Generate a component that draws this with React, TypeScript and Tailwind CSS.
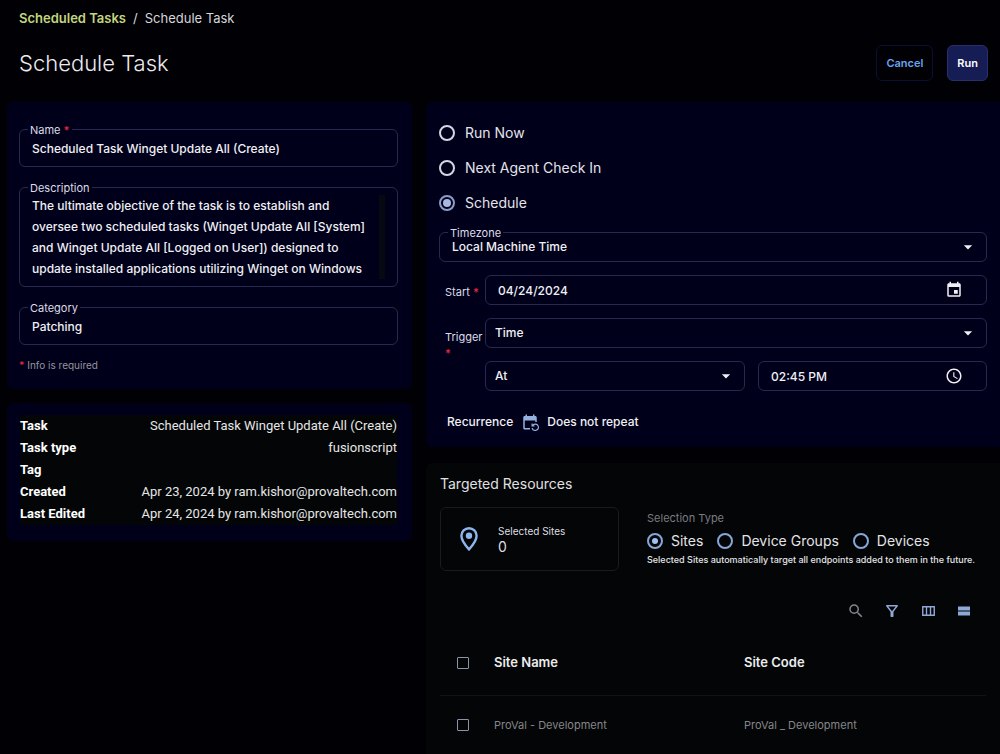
import type { ReactNode } from 'react';
import { clsx } from 'clsx';
import {
  MdAccessTime,
  MdArrowDropDown,
  MdEvent,
  MdEventRepeat,
  MdOutlineFilterAlt,
  MdSearch,
} from 'react-icons/md';

const DESCRIPTION =
  'The ultimate objective of the task is to establish and oversee two scheduled tasks (Winget Update All [System] and Winget Update All [Logged on User]) designed to update installed applications utilizing Winget on Windows';

const INFO = [
  { label: 'Task', value: 'Scheduled Task Winget Update All (Create)' },
  { label: 'Task type', value: 'fusionscript' },
  { label: 'Tag', value: '' },
  { label: 'Created', value: 'Apr 23, 2024 by ram.kishor@provaltech.com' },
  { label: 'Last Edited', value: 'Apr 24, 2024 by ram.kishor@provaltech.com' },
];

const SITES = [{ name: 'ProVal - Development', code: 'ProVal _ Development' }];

function Required() {
  return <span className="font-semibold text-[#e0243c]">*</span>;
}

function OutlinedField({
  id,
  label,
  required,
  children,
}: {
  id: string;
  label: string;
  required?: boolean;
  children: ReactNode;
}) {
  return (
    <div className="relative rounded-md border border-[#28294f]">
      <label
        htmlFor={id}
        className="absolute -top-2 left-2 bg-[#00001a] px-0.5 text-[11px] leading-4 text-[#dcdce6]"
      >
        {label} {required && <Required />}
      </label>
      {children}
    </div>
  );
}

function SelectBox({ id, options, className }: { id: string; options: string[]; className?: string }) {
  return (
    <div className="relative">
      <select
        id={id}
        aria-label={id}
        className={clsx(
          'block h-7 w-full appearance-none bg-transparent pr-8 text-xs font-medium outline-none',
          className,
        )}
      >
        {options.map((option) => (
          <option key={option}>{option}</option>
        ))}
      </select>
      <MdArrowDropDown className="pointer-events-none absolute top-1 right-2 size-5" />
    </div>
  );
}

function Radio({
  name,
  label,
  tone,
  defaultChecked,
}: {
  name: string;
  label: string;
  tone: 'light' | 'blue';
  defaultChecked?: boolean;
}) {
  return (
    <label
      className={clsx(
        'flex items-center text-sm leading-5 text-[#e4e4e8]',
        tone === 'light' ? 'gap-[10px]' : 'gap-2',
      )}
    >
      <input
        type="radio"
        name={name}
        defaultChecked={defaultChecked}
        className={clsx(
          'size-4 shrink-0 appearance-none rounded-full border-2 bg-clip-content p-0.5',
          tone === 'light'
            ? 'border-[#d5d5e6] checked:border-[#8d9cc6] checked:bg-[#a9b8e2]'
            : 'border-[#86a7d8] checked:bg-[#9cc2f5] checked:p-[3px]',
        )}
      />
      {label}
    </label>
  );
}

function Checkbox({ label }: { label: string }) {
  return (
    <input
      type="checkbox"
      aria-label={label}
      className="block size-3 appearance-none rounded-[1px] border border-[#8b93ab] checked:bg-[#8b93ab]"
    />
  );
}

function PinIcon() {
  return (
    <svg viewBox="0 0 18 24" className="h-6 w-[18px] text-[#8db5ee]">
      <path
        d="M9 1.3c-4.2 0-7.6 3.3-7.6 7.5C1.4 14.2 9 22.4 9 22.4s7.6-8.2 7.6-13.6c0-4.2-3.4-7.5-7.6-7.5z"
        fill="none"
        stroke="currentColor"
        strokeWidth="2.4"
      />
      <circle cx="9" cy="8.8" r="3.2" fill="currentColor" />
    </svg>
  );
}

function ColumnsIcon() {
  return (
    <svg viewBox="0 0 13 10" className="h-[10px] w-[13px]" fill="none" stroke="currentColor">
      <path d="M.75.75h11.5v8.5H.75zM4.5.75v8.5M8.5.75v8.5" strokeWidth="1.4" />
    </svg>
  );
}

function RowsIcon() {
  return (
    <svg viewBox="0 0 12 10" className="h-[10px] w-3" fill="currentColor">
      <path d="M0 .5h12v4H0zM0 5.5h12v4H0z" />
    </svg>
  );
}

function Header() {
  return (
    <header className="pr-3 pl-[19px]">
      <nav className="flex gap-[7px] pt-2 text-[13px] leading-5 text-[#d6d6da]">
        <a href="#tasks" className="font-semibold text-[#c3d67c]">
          Scheduled Tasks
        </a>
        <span>/</span>
        <span>Schedule Task</span>
      </nav>
      <div className="flex items-center justify-between pt-[17px] pb-[21px]">
        <h1 className="text-[22px] leading-8 font-light text-[#ececef]">Schedule Task</h1>
        <div className="flex gap-[14px] text-[11px] font-semibold">
          <button type="button" className="h-9 rounded-md border border-[#0a0f35] px-[9px] text-[#68a5f0]">
            Cancel
          </button>
          <button type="button" className="h-9 rounded-md border border-[#27306c] bg-[#151d54] px-[9px] text-white">
            Run
          </button>
        </div>
      </div>
    </header>
  );
}

function DetailsPanel() {
  return (
    <section className="rounded-md bg-[#00001a] pt-[27px] pr-[14px] pb-4 pl-3">
      <div className="flex flex-col gap-5">
        <OutlinedField id="name" label="Name" required>
          <input
            id="name"
            defaultValue="Scheduled Task Winget Update All (Create)"
            className="block h-9 w-full bg-transparent px-3 text-xs font-medium outline-none"
          />
        </OutlinedField>
        <OutlinedField id="description" label="Description">
          <div className="flex py-[7px] pr-3 pl-3">
            <textarea
              id="description"
              rows={4}
              defaultValue={DESCRIPTION}
              className="block min-w-0 flex-1 resize-none overflow-hidden bg-transparent pr-1 text-xs leading-[21px] font-medium outline-none"
            />
            <div className="w-[6px] bg-[#060a10]" />
          </div>
        </OutlinedField>
        <OutlinedField id="category" label="Category">
          <input
            id="category"
            defaultValue="Patching"
            className="block h-9 w-full bg-transparent px-3 text-xs font-medium outline-none"
          />
        </OutlinedField>
      </div>
      <p className="pt-3 text-[10px] leading-4 text-[#96969c]">
        <Required /> Info is required
      </p>
    </section>
  );
}

function InfoPanel() {
  return (
    <section className="rounded-md bg-[#00001a] pt-3 pr-[15px] pb-4 pl-[13px] font-['Roboto',sans-serif]">
      <dl className="bg-[#030506] text-[13px] leading-[22px] text-[#e6e6e6]">
        {INFO.map(({ label, value }) => (
          <div key={label} className="flex justify-between">
            <dt className="font-bold text-white">{label}</dt>
            <dd>{value}</dd>
          </div>
        ))}
      </dl>
    </section>
  );
}

function SchedulePanel() {
  return (
    <section className="rounded-l-md bg-[#00001a] px-[13px] pt-[21px] pb-[15px]">
      <div className="flex flex-col gap-[15px]">
        <Radio name="when" label="Run Now" tone="light" />
        <Radio name="when" label="Next Agent Check In" tone="light" />
        <Radio name="when" label="Schedule" tone="light" defaultChecked />
      </div>
      <div className="pt-[19px]">
        <OutlinedField id="timezone" label="Timezone">
          <SelectBox id="timezone" options={['Local Machine Time']} className="pl-3" />
        </OutlinedField>
      </div>
      <div className="grid grid-cols-[46px_minmax(0,1fr)] gap-y-[13px] pt-[13px]">
        <label htmlFor="start" className="pt-[9px] pl-1.5 text-[11px] leading-4 text-[#dcdce6]">
          Start <Required />
        </label>
        <div className="flex items-center rounded-md border border-[#28294f]">
          <input
            id="start"
            defaultValue="04/24/2024"
            className="h-7 min-w-0 flex-1 bg-transparent pl-3 text-xs font-medium outline-none"
          />
          <button type="button" aria-label="Pick a date" className="mr-[23px]">
            <MdEvent className="size-[18px]" />
          </button>
        </div>
        <label htmlFor="trigger" className="pt-[11px] pl-1.5 text-[11px] leading-4 text-[#dcdce6]">
          Trigger <Required />
        </label>
        <div className="flex flex-col gap-[13px]">
          <div className="rounded-md border border-[#28294f]">
            <SelectBox id="trigger" options={['Time']} className="pl-[9px]" />
          </div>
          <div className="grid grid-cols-[minmax(0,260fr)_minmax(0,229fr)] gap-[13px]">
            <div className="rounded-md border border-[#28294f]">
              <SelectBox id="at" options={['At']} className="pl-[9px]" />
            </div>
            <div className="flex items-center rounded-md border border-[#28294f]">
              <input
                aria-label="Time of day"
                defaultValue="02:45 PM"
                className="h-7 min-w-0 flex-1 bg-transparent pl-3 text-xs font-medium outline-none"
              />
              <button type="button" aria-label="Pick a time" className="mr-[23px]">
                <MdAccessTime className="size-[18px]" />
              </button>
            </div>
          </div>
        </div>
      </div>
      <div className="flex items-center gap-2 pt-[21px] pl-2 text-xs leading-5 font-medium">
        <span>Recurrence</span>
        <MdEventRepeat className="size-[18px] text-[#93b2e0]" />
        <span>Does not repeat</span>
      </div>
    </section>
  );
}

function TargetsPanel() {
  return (
    <section className="flex-1 rounded-tl-md bg-[#030506] px-[14px] pt-[11px]">
      <h2 className="text-sm leading-5 text-[#e0e0e2]">Targeted Resources</h2>
      <div className="flex gap-7 pt-[13px]">
        <div className="flex h-16 w-[179px] shrink-0 items-center gap-5 rounded-md border border-[#181b20] pl-[19px]">
          <PinIcon />
          <div className="text-[#dedee2]">
            <div className="text-[10px] leading-4">Selected Sites</div>
            <div className="text-sm leading-4">0</div>
          </div>
        </div>
        <div role="radiogroup" aria-labelledby="selection-type" className="pt-[3px] text-[#e4e4e8]">
          <div id="selection-type" className="text-[11px] leading-4 text-[#7c7c80]">
            Selection Type
          </div>
          <div className="flex gap-[14px] pt-[5px]">
            <Radio name="selection" label="Sites" tone="blue" defaultChecked />
            <Radio name="selection" label="Device Groups" tone="blue" />
            <Radio name="selection" label="Devices" tone="blue" />
          </div>
          <p className="text-[9px] leading-[18px] font-medium whitespace-nowrap">
            Selected Sites automatically target all endpoints added to them in the future.
          </p>
        </div>
      </div>
      <div className="flex items-center justify-end gap-3 pt-7 pr-[10px] text-[#8fa9d6]">
        <button type="button" aria-label="Search" className="grid size-6 place-items-center text-[#82858e]">
          <MdSearch className="size-[18px]" />
        </button>
        <button type="button" aria-label="Filter" className="grid size-6 place-items-center">
          <MdOutlineFilterAlt className="size-[18px]" />
        </button>
        <button type="button" aria-label="Columns" className="grid size-6 place-items-center">
          <ColumnsIcon />
        </button>
        <button type="button" aria-label="Density" className="grid size-6 place-items-center">
          <RowsIcon />
        </button>
      </div>
      <table className="mt-2 w-full table-fixed text-left">
        <thead>
          <tr className="h-16 border-b border-[#111316] text-[13px] text-[#ececee]">
            <th className="w-[54px] pl-[17px]">
              <Checkbox label="Select all sites" />
            </th>
            <th className="w-[250px] font-semibold">Site Name</th>
            <th className="font-semibold">Site Code</th>
          </tr>
        </thead>
        <tbody>
          {SITES.map(({ name, code }) => (
            <tr key={name} className="h-[60px] text-[11px] text-[#86868a]">
              <td className="pl-[17px]">
                <Checkbox label={name} />
              </td>
              <td>{name}</td>
              <td>{code}</td>
            </tr>
          ))}
        </tbody>
      </table>
    </section>
  );
}

export default function App() {
  return (
    <div className="flex min-h-screen flex-col bg-[#000005] font-['Inter',sans-serif] text-[#f0f0f4]">
      <Header />
      <main className="grid flex-1 grid-cols-[405fr_574fr] gap-[14px] pl-[7px]">
        <div className="flex min-w-0 flex-col gap-[14px]">
          <DetailsPanel />
          <InfoPanel />
        </div>
        <div className="flex min-w-0 flex-col gap-4">
          <SchedulePanel />
          <TargetsPanel />
        </div>
      </main>
    </div>
  );
}
